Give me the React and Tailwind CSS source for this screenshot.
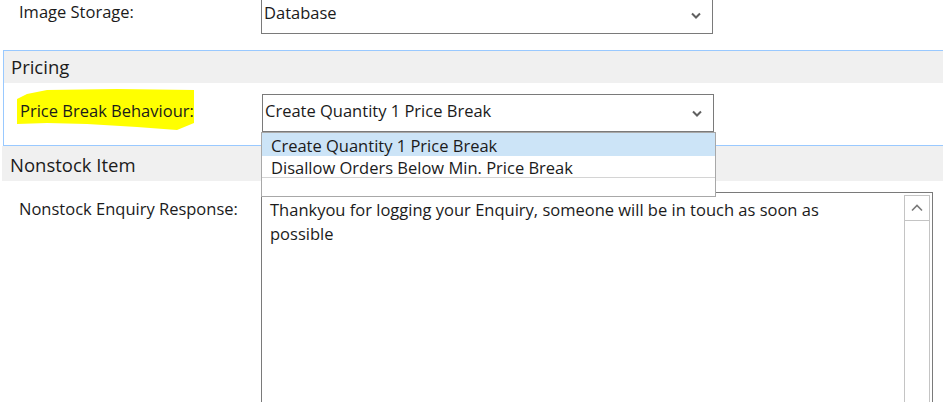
import React from 'react';

const Chevron = ({ className = '' }) => (
  <svg width="10" height="7" viewBox="0 0 10 7" className={className}>
    <path d="M1 1.5 L5 5.5 L9 1.5" fill="none" stroke="#606060" strokeWidth="2" />
  </svg>
);

const Select = ({ value, className = '' }) => (
  <div className={`w-[452px] h-[38px] border border-[#7a7a7a] bg-white flex items-center justify-between pl-[2px] pr-[11px] ${className}`}>
    <span className="pb-[4px]">{value}</span>
    <Chevron />
  </div>
);

const App = () => {
  return (
    <div className="relative w-[943px] h-[402px] overflow-hidden bg-white text-[16.5px] leading-[22px] text-[#1b1b1b] font-['Open_Sans',sans-serif]">
      {/* Image storage row */}
      <div className="flex h-[34px]">
        <div className="w-[261px] pl-[19px] pt-[1px]">Image Storage:</div>
        <Select value="Database" className="-mt-[4px]" />
      </div>

      {/* Pricing section */}
      <div className="mt-[16px] ml-[3px] border-t border-l border-b border-[#99c9ff]">
        <div className="h-[32px] bg-[#f0f0f0] flex items-center pl-[7px] text-[18.5px]">Pricing</div>
        <div className="h-[62px] flex items-start pt-[11px]">
          <div className="relative w-[258px] pl-[16px] pt-[6px]">
            <svg className="absolute left-[13px] top-[-5px]" width="178" height="42" viewBox="0 0 178 42">
              <polygon
                points="0,10 10,5 30,1 100,0 177,1 177,34 160,41 120,38 70,35 30,34 0,35"
                fill="#ffff00"
              />
            </svg>
            <span className="relative">Price Break Behaviour:</span>
          </div>
          <Select value="Create Quantity 1 Price Break" />
        </div>
      </div>

      {/* Nonstock section */}
      <div className="ml-[2px] h-[35px] bg-[#f0f0f0] flex items-center pl-[8px] pt-[3px] text-[18.5px]">Nonstock Item</div>
      <div className="flex mt-[11px]">
        <div className="w-[261px] pl-[19px] pt-[6px]">Nonstock Enquiry Response:</div>
        <div className="w-[672px] h-[240px] border border-[#7a7a7a] flex">
          <div className="w-[620px] pl-[8px] pt-[5px] leading-[24px]">
            Thankyou for logging your Enquiry, someone will be in touch as soon as possible
          </div>
          <div className="flex-1" />
          <div className="w-[26px] mt-[2px] mr-[2px] border border-[#c4c4c4] flex flex-col">
            <div className="h-[25px] border-b border-[#c4c4c4] flex items-center justify-center">
              <svg width="12" height="8" viewBox="0 0 12 8">
                <path d="M1 6.5 L6 1.5 L11 6.5" fill="none" stroke="#7a7a7a" strokeWidth="1.6" />
              </svg>
            </div>
          </div>
        </div>
      </div>

      {/* Open dropdown list */}
      <div className="absolute left-[261px] top-[132px] w-[455px] h-[65px] bg-white border border-[#a8a8a8]">
        <div className="h-[23px] bg-[#cce4f7] pl-[9px] pt-[3px] flex items-center">Create Quantity 1 Price Break</div>
        <div className="h-[22px] pl-[9px] pt-[3px] flex items-center border-b border-[#d4d4d4]">Disallow Orders Below Min. Price Break</div>
      </div>
    </div>
  );
};

export default App;
